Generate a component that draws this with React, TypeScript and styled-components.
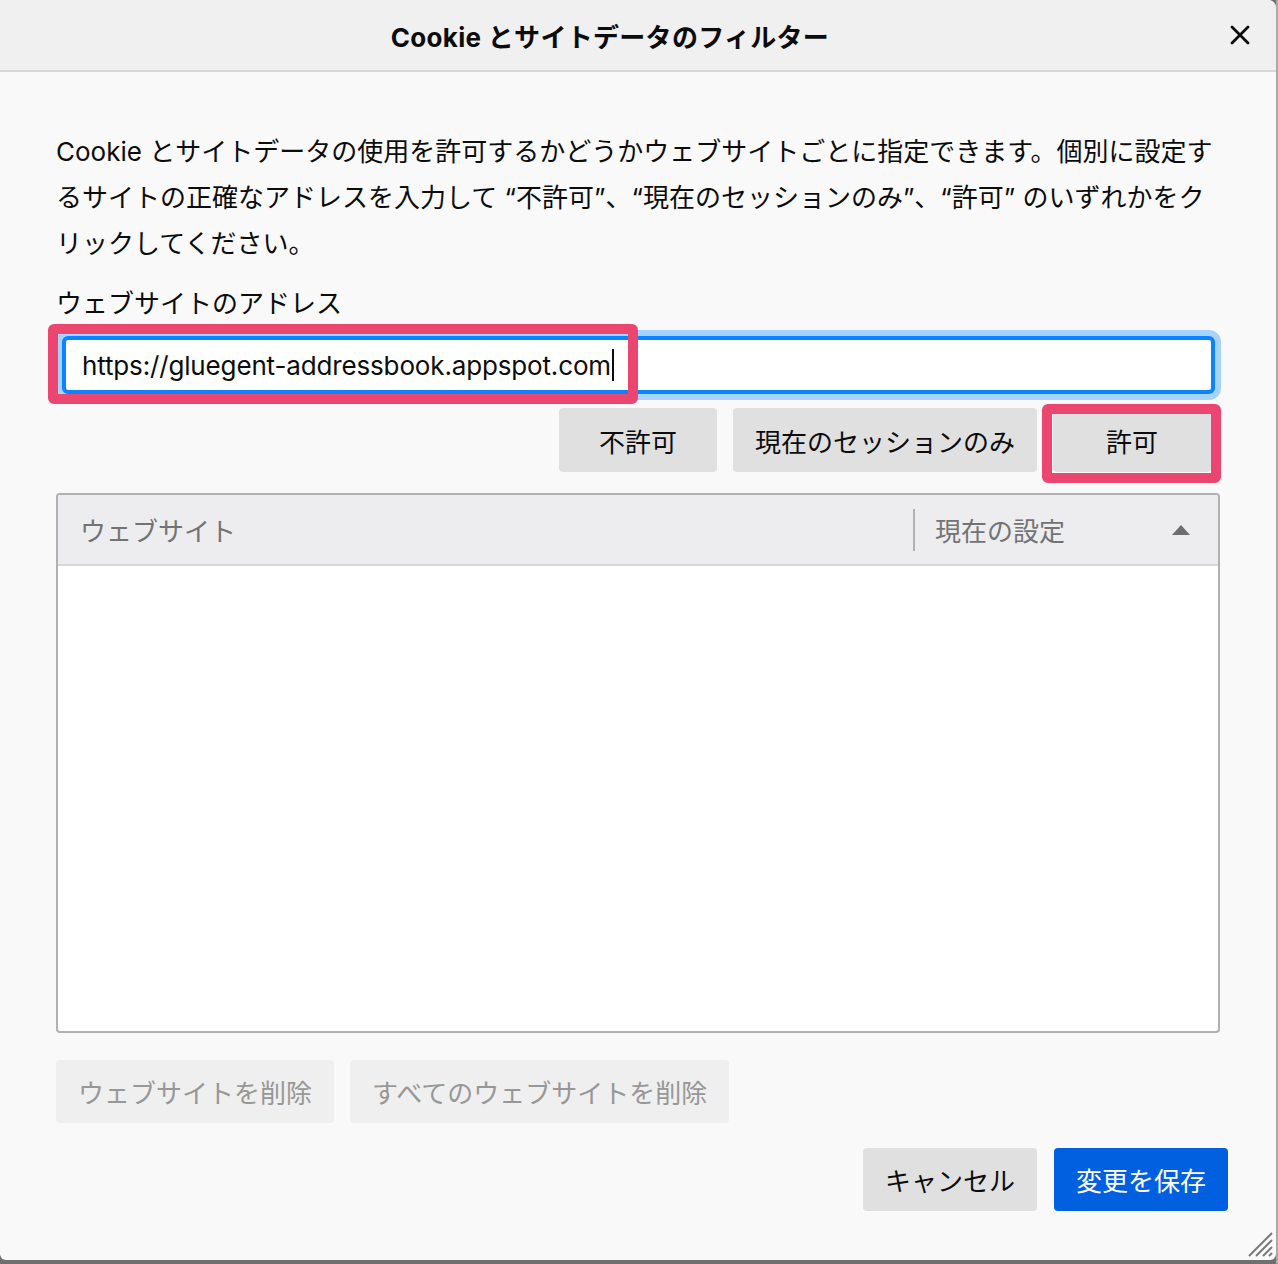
import React from "react";
import styled, { createGlobalStyle } from "styled-components";

const GlobalStyle = createGlobalStyle`
  html, body { margin: 0; padding: 0; }
  body {
    background: #6f6f6f;
    font-family: Inter, "Noto Sans CJK JP", sans-serif;
    color: #0c0c0d;
  }
`;

const Screen = styled.div`
  width: 1278px;
  height: 1264px;
  background: linear-gradient(to right, #6f6f6f 0, #6f6f6f 1276px, #a9a9a9 1276px);
  overflow: hidden;
`;

const Window = styled.div`
  position: relative;
  width: 1276px;
  height: 1260px;
  background: #f9f9fa;
  border-radius: 0 8px 6px 6px;
  display: flex;
  flex-direction: column;
  overflow: hidden;
`;

const TitleBar = styled.div`
  height: 70px;
  flex: none;
  display: flex;
  align-items: center;
  background: #f0f0f0;
  border-bottom: 2px solid #d7d7db;
`;

const Title = styled.h1`
  flex: 1;
  margin: 0;
  text-align: center;
  font-size: 26px;
  font-weight: 700;
  letter-spacing: 0.3px;
  color: #0c0c0d;
`;

const CloseButton = styled.button`
  width: 40px;
  height: 40px;
  margin-right: 16px;
  border: none;
  background: transparent;
  display: flex;
  align-items: center;
  justify-content: center;
  padding: 0;
`;

const Content = styled.div`
  flex: 1;
  display: flex;
  flex-direction: column;
  padding: 0 56px;
`;

const Description = styled.p`
  margin: 57px 0 0;
  font-size: 26px;
  line-height: 46px;
  white-space: nowrap;
`;

const Label = styled.div`
  margin-top: 20px;
  font-size: 26px;
  line-height: 34px;
`;

const FieldWrap = styled.div`
  position: relative;
  margin: 15px 5px 0 6px;
`;

const TextField = styled.div`
  height: 58px;
  box-sizing: border-box;
  border: 4px solid #0a84ff;
  border-radius: 6px;
  background: #fff;
  box-shadow: 0 0 0 6px #a6d3fd;
  display: flex;
  align-items: center;
  padding-left: 16px;
  font-size: 26px;
  letter-spacing: -0.15px;
`;

const Caret = styled.span`
  display: inline-block;
  width: 2px;
  height: 32px;
  background: #0c0c0d;
  margin-left: 1px;
`;

const Highlight = styled.div<{ $l: number; $t: number; $w: number; $h: number }>`
  position: absolute;
  left: ${(p) => p.$l}px;
  top: ${(p) => p.$t}px;
  width: ${(p) => p.$w}px;
  height: ${(p) => p.$h}px;
  box-sizing: border-box;
  border: 10px solid #ea466f;
  border-radius: 6px;
  pointer-events: none;
`;

const ButtonRow = styled.div<{ $mt: number; $justify?: string; $pr?: number }>`
  display: flex;
  justify-content: ${(p) => p.$justify || "flex-end"};
  gap: 16px;
  margin-top: ${(p) => p.$mt}px;
  padding-right: ${(p) => p.$pr || 0}px;
  position: relative;
`;

const Button = styled.button<{ $variant?: "default" | "disabled" | "primary"; $h?: number }>`
  height: ${(p) => p.$h || 64}px;
  min-width: 158px;
  padding: 0 22px;
  border: none;
  border-radius: 4px;
  font-family: Inter, "Noto Sans CJK JP", sans-serif;
  font-size: 26px;
  background: ${(p) =>
    p.$variant === "primary" ? "#0060df" : p.$variant === "disabled" ? "#efefef" : "#e0e0e1"};
  color: ${(p) =>
    p.$variant === "primary" ? "#ffffff" : p.$variant === "disabled" ? "#979797" : "#0c0c0d"};
`;

const AllowWrap = styled.div`
  position: relative;
  display: flex;
`;

const Tree = styled.div`
  margin-top: 21px;
  height: 540px;
  box-sizing: border-box;
  border: 2px solid #b1b1b3;
  border-radius: 4px;
  background: #fff;
  display: flex;
  flex-direction: column;
  overflow: hidden;
`;

const TreeHeader = styled.div`
  height: 71px;
  flex: none;
  box-sizing: border-box;
  background: #ededf0;
  border-bottom: 2px solid #d7d7db;
  display: flex;
  align-items: center;
`;

const HeaderCell = styled.div<{ $flex: string; $pl: number }>`
  flex: ${(p) => p.$flex};
  box-sizing: border-box;
  height: 42px;
  display: flex;
  align-items: center;
  padding-left: ${(p) => p.$pl}px;
  padding-right: 28px;
  font-size: 26px;
  color: #737373;
`;

const Splitter = styled.div`
  width: 2px;
  height: 42px;
  background: #b1b1b3;
`;

const HeaderText = styled.span`
  flex: 1;
`;

const Footer = styled.div`
  margin-top: 25px;
  display: flex;
  justify-content: flex-end;
  gap: 17px;
  margin-right: -8px;
`;

const Grip = styled.svg`
  position: absolute;
  right: 3px;
  bottom: 3px;
`;

export default function App() {
  return (
    <>
      <GlobalStyle />
      <Screen>
        <Window>
          <TitleBar>
            <Title>Cookie とサイトデータのフィルター</Title>
            <CloseButton aria-label="閉じる">
              <svg width="22" height="22" viewBox="0 0 22 22">
                <path d="M3 3 L19 19 M19 3 L3 19" stroke="#0c0c0d" strokeWidth="2.8" strokeLinecap="round" />
              </svg>
            </CloseButton>
          </TitleBar>
          <Content>
            <Description>
              Cookie とサイトデータの使用を許可するかどうかウェブサイトごとに指定できます。個別に設定す
              <br />
              るサイトの正確なアドレスを入力して “不許可”、“現在のセッションのみ”、“許可” のいずれかをク
              <br />
              リックしてください。
            </Description>
            <Label>ウェブサイトのアドレス</Label>
            <FieldWrap>
              <TextField role="textbox">
                https://gluegent-addressbook.appspot.com
                <Caret />
              </TextField>
              <Highlight $l={-14} $t={-12} $w={590} $h={80} />
            </FieldWrap>
            <ButtonRow $mt={14} $pr={9}>
              <Button>不許可</Button>
              <Button>現在のセッションのみ</Button>
              <AllowWrap>
                <Button>許可</Button>
                <Highlight $l={-11} $t={-4} $w={179} $h={79} />
              </AllowWrap>
            </ButtonRow>
            <Tree>
              <TreeHeader>
                <HeaderCell $flex="0 0 855px" $pl={22}>
                  <HeaderText>ウェブサイト</HeaderText>
                </HeaderCell>
                <Splitter />
                <HeaderCell $flex="1" $pl={20}>
                  <HeaderText>現在の設定</HeaderText>
                  <svg width="18" height="10" viewBox="0 0 18 10">
                    <path d="M9 0 L18 10 L0 10 Z" fill="#6d6d6d" />
                  </svg>
                </HeaderCell>
              </TreeHeader>
            </Tree>
            <ButtonRow $mt={27} $justify="flex-start">
              <Button $variant="disabled" $h={63}>ウェブサイトを削除</Button>
              <Button $variant="disabled" $h={63}>すべてのウェブサイトを削除</Button>
            </ButtonRow>
            <Footer>
              <Button $h={63}>キャンセル</Button>
              <Button $variant="primary" $h={63}>変更を保存</Button>
            </Footer>
          </Content>
          <Grip width="26" height="26" viewBox="0 0 26 26">
            <path d="M2 25 L25 2 M9 25 L25 9 M16 25 L25 16 M22 25 L25 22" stroke="#7b7b7b" strokeWidth="2" />
          </Grip>
        </Window>
      </Screen>
    </>
  );
}
